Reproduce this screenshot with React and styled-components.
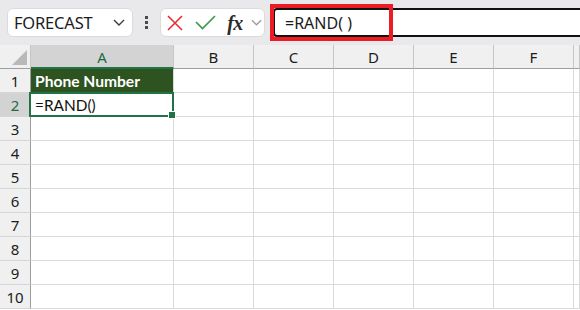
import React from "react";
import styled, { createGlobalStyle } from "styled-components";

const GlobalStyle = createGlobalStyle`
  html, body { margin: 0; padding: 0; background: #ffffff; overflow: hidden; }
  * { box-sizing: border-box; }
`;

const Page = styled.div`
  width: 580px;
  height: 310px;
  overflow: hidden;
  background: #ffffff;
  font-family: "Noto Sans", "Open Sans", sans-serif;
`;

const Toolbar = styled.div`
  height: 45px;
  background: #e9e8ea;
  display: flex;
  align-items: center;
  padding-left: 7px;
`;

const Pill = styled.div`
  flex: none;
  height: 29px;
  width: ${(p) => p.$w}px;
  background: #ffffff;
  border: 1px solid #dcdadd;
  border-radius: 6px;
  display: flex;
  align-items: center;
`;

const NameText = styled.span`
  font-size: 16.5px;
  color: #1b1b1b;
  padding-left: 6px;
  flex: 1;
  letter-spacing: -0.2px;
`;

const Chevron = styled.svg`
  display: block;
  flex: none;
  margin-right: ${(p) => p.$mr}px;
`;

const Dots = styled.div`
  flex: none;
  width: 27px;
  display: flex;
  flex-direction: column;
  align-items: center;
  gap: 2px;
  span {
    width: 3px;
    height: 3px;
    background: #4a4a4a;
  }
`;

const IconSlot = styled.div`
  width: ${(p) => p.$w}px;
  display: flex;
  justify-content: center;
  align-items: center;
`;

const Fx = styled.span`
  font-family: "Liberation Serif", "DejaVu Serif", serif;
  font-style: italic;
  font-weight: bold;
  font-size: 20px;
  color: #2b2b2b;
  letter-spacing: -0.5px;
  line-height: 1;
`;

const BarWrap = styled.div`
  position: relative;
  flex: 1;
  min-width: 0;
  height: 45px;
  display: flex;
  align-items: center;
  padding-left: 8px;
`;

const FormulaInput = styled.div`
  flex: 1;
  height: 29px;
  margin-right: -10px;
  background: #ffffff;
  border: 2px solid #111111;
  border-radius: 4px;
  display: flex;
  align-items: center;
  padding-left: 10px;
  font-size: 16px;
  color: #1b1b1b;
`;

const Highlight = styled.div`
  position: absolute;
  left: 5px;
  top: 4px;
  width: 123px;
  height: 37px;
  border: 4px solid #ec1c24;
  pointer-events: none;
`;

const Grid = styled.div`
  display: grid;
  grid-template-columns: 31px 143px repeat(5, 80px) 1fr;
  grid-auto-rows: 24px;
`;

const Corner = styled.div`
  background: #f0f0f0;
  border-right: 1px solid #c6c6c6;
  border-bottom: 1px solid #9e9e9e;
  position: relative;
  &::after {
    content: "";
    position: absolute;
    right: 3px;
    bottom: 3px;
    width: 0;
    height: 0;
    border-left: 15px solid transparent;
    border-bottom: 15px solid #b9b9b9;
  }
`;

const ColHead = styled.div`
  background: ${(p) => (p.$sel ? "#d3d3d3" : "#f0f0f0")};
  color: ${(p) => (p.$sel ? "#1d6b40" : "#1b1b1b")};
  border-right: 1px solid #c6c6c6;
  border-bottom: ${(p) => (p.$sel ? "2px solid #217346" : "1px solid #9e9e9e")};
  display: flex;
  align-items: center;
  justify-content: center;
  font-size: 15px;
  padding-top: ${(p) => (p.$sel ? "1px" : "0")};
`;

const RowHead = styled.div`
  background: ${(p) => (p.$sel ? "#d3d3d3" : "#f0f0f0")};
  color: ${(p) => (p.$sel ? "#1d6b40" : "#1b1b1b")};
  border-right: 1px solid #9e9e9e;
  border-bottom: 1px solid #d6d6d6;
  display: flex;
  align-items: center;
  justify-content: center;
  font-size: 15px;
`;

const Cell = styled.div`
  border-right: 1px solid #dadada;
  border-bottom: 1px solid #dadada;
  background: ${(p) => (p.$fill ? "#2c5320" : "#ffffff")};
  color: ${(p) => (p.$fill ? "#ffffff" : "#111111")};
  font-family: "Lato", "Open Sans", sans-serif;
  font-weight: ${(p) => (p.$bold ? 700 : 400)};
  font-size: ${(p) => (p.$bold ? 15.6 : 15.4)}px;
  display: flex;
  align-items: center;
  padding-left: 4px;
  white-space: nowrap;
  position: relative;
`;

const ActiveCell = styled(Cell)`
  &::after {
    content: "";
    position: absolute;
    left: -2px;
    top: -1px;
    right: -1px;
    bottom: -1px;
    border: 2px solid #217346;
    pointer-events: none;
  }
  &::before {
    content: "";
    position: absolute;
    right: -3px;
    bottom: -3px;
    width: 6px;
    height: 6px;
    background: #217346;
    border: 1px solid #ffffff;
    z-index: 1;
  }
`;

const cols = ["A", "B", "C", "D", "E", "F", ""];

function ChevronIcon({ w = 12, h = 7, mr = 0, color = "#3a3a3a" }) {
  return (
    <Chevron $mr={mr} width={w} height={h} viewBox="0 0 12 7">
      <polyline points="1,1 6,6 11,1" fill="none" stroke={color} strokeWidth="1.4" />
    </Chevron>
  );
}

export default function App() {
  const rows = [1, 2, 3, 4, 5, 6, 7, 8, 9, 10];
  return (
    <Page>
      <GlobalStyle />
      <Toolbar>
        <Pill $w={126}>
          <NameText>FORECAST</NameText>
          <ChevronIcon mr={7} />
        </Pill>
        <Dots>
          <span />
          <span />
          <span />
        </Dots>
        <Pill $w={105}>
          <IconSlot $w={27}>
            <svg width="16" height="16" viewBox="0 0 16 16">
              <path d="M1 1 L15 15 M15 1 L1 15" stroke="#e52f36" strokeWidth="1.6" fill="none" />
            </svg>
          </IconSlot>
          <IconSlot $w={34}>
            <svg width="21" height="15" viewBox="0 0 21 15">
              <polyline points="1,7 7.5,13.5 20,1" stroke="#3b9b4f" strokeWidth="1.7" fill="none" />
            </svg>
          </IconSlot>
          <IconSlot $w={26}>
            <Fx>fx</Fx>
          </IconSlot>
          <IconSlot $w={16}>
            <ChevronIcon w={11} h={7} color="#9a9a9a" />
          </IconSlot>
        </Pill>
        <BarWrap>
          <FormulaInput>=RAND( )</FormulaInput>
          <Highlight />
        </BarWrap>
      </Toolbar>
      <Grid>
        <Corner />
        {cols.map((c, i) => (
          <ColHead key={"h" + i} $sel={c === "A"}>
            {c}
          </ColHead>
        ))}
        {rows.map((r) => (
          <React.Fragment key={r}>
            <RowHead $sel={r === 2}>{r}</RowHead>
            {cols.map((c, i) => {
              if (r === 1 && c === "A")
                return (
                  <Cell key={c + r} $fill $bold>
                    Phone Number
                  </Cell>
                );
              if (r === 2 && c === "A") return <ActiveCell key={c + r}>=RAND()</ActiveCell>;
              return <Cell key={c + r + i} />;
            })}
          </React.Fragment>
        ))}
      </Grid>
    </Page>
  );
}
